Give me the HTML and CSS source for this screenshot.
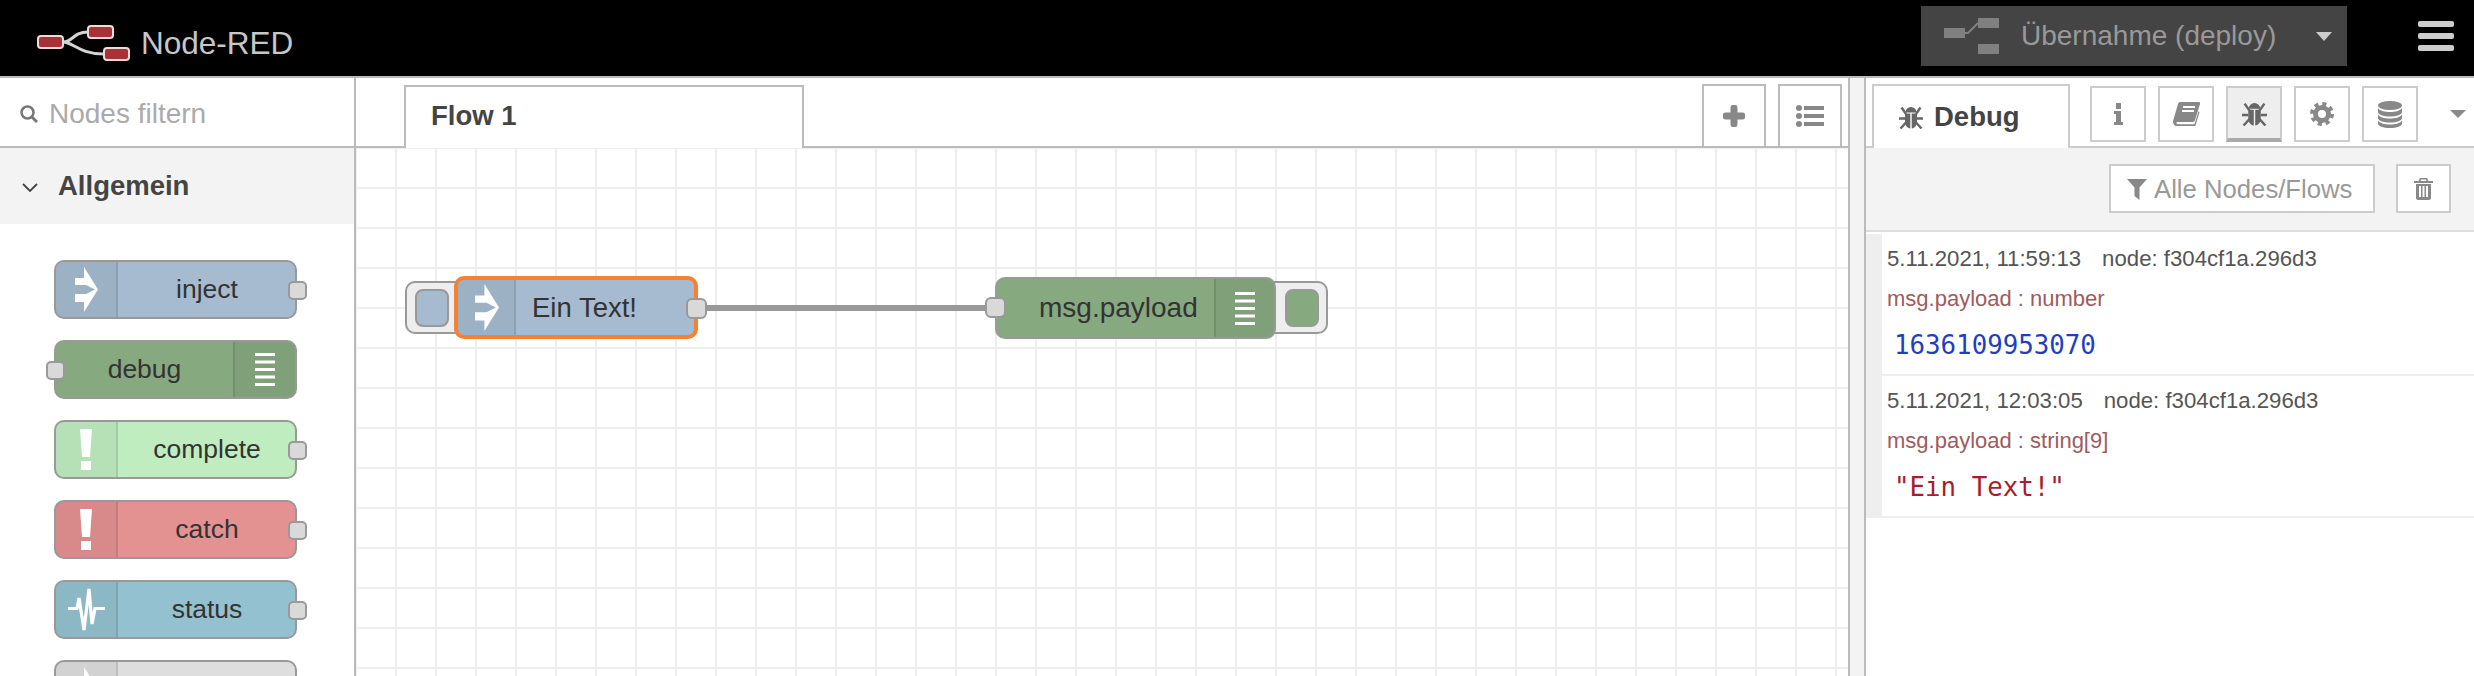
FILE: index.html
```html
<!DOCTYPE html>
<html lang="de">
<head>
<meta charset="utf-8">
<title>Node-RED</title>
<link rel="stylesheet" href="styles.css">
</head>
<body>
<svg class="defs" width="0" height="0">
  <defs>
    <symbol id="arrow" viewBox="0 0 24 45"><path d="M1 11H10V0L24 22.500L10 45V35H1V27H12L21 22.500L12 18H1Z"/></symbol>
    <symbol id="lines" viewBox="0 0 20 33"><path d="M0 0h20v3H0zM0 7.500h20v3H0zM0 15h20v3H0zM0 22.500h20v3H0zM0 30h20v3H0z"/></symbol>
    <symbol id="alert" viewBox="0 0 12 41"><path d="M0 0h12l-2 28H2zM1 32h10v9H1z"/></symbol>
    <symbol id="bug" viewBox="0 0 24 24"><path d="M6.500 7.500a5.500 5.500 0 0 1 11 0zM6 8.500h5.300V23.500C8 23 6 20 6 17zM12.700 8.500H18V17c0 3-2 6-5.300 6.500z"/><path d="M2.500 2.500l4.500 6.500M21.500 2.500L17 9M0 13.500h6M24 13.500h-6M1.500 23.500l5.500-6M22.500 23.500l-5.500-6" fill="none" stroke="currentColor" stroke-width="2.400"/></symbol>
  </defs>
</svg>

<header class="topbar">
  <div class="brand">
    <svg class="logo" width="96" height="40" viewBox="0 0 96 40">
      <path class="logo-wire" d="M27 18c10 0 10-10 25-10M27 18c10 0 16 12 41 12"/>
      <rect class="logo-node" x="2" y="12" width="25" height="12" rx="3"/>
      <rect class="logo-node" x="52" y="2" width="25" height="12" rx="3"/>
      <rect class="logo-node" x="68" y="24" width="25" height="12" rx="3"/>
    </svg>
    <span class="brand-name">Node-RED</span>
  </div>
  <button class="deploy">
    <svg class="deploy-icon" width="55" height="36" viewBox="0 0 55 36">
      <path d="M0 10h21v10H0zM34 0h21v10H34zM34 26h21v10H34z"/>
      <path d="M20 15h4L34 5" fill="none" stroke="currentColor" stroke-width="2"/>
    </svg>
    <span class="deploy-label">Übernahme (deploy)</span>
    <span class="caret caret-deploy"></span>
  </button>
  <div class="hamburger"><i></i><i></i><i></i></div>
</header>

<main class="main">
  <aside class="palette">
    <div class="filter">
      <svg class="search-icon" width="18" height="18" viewBox="0 0 18 18"><circle cx="7.500" cy="7.500" r="6" fill="none" stroke="currentColor" stroke-width="2.500"/><path d="M11.500 11.500L17 17" stroke="currentColor" stroke-width="3"/></svg>
      <span class="filter-text">Nodes filtern</span>
    </div>
    <div class="category">
      <svg class="chevron" width="16" height="9" viewBox="0 0 16 9"><path d="M1 1l7 7 7-7" fill="none" stroke="currentColor" stroke-width="1.800"/></svg>
      <span>Allgemein</span>
    </div>
    <div class="palette-list">
      <div class="pnode c-inject">
        <span class="picon"><svg class="i-arrow"><use href="#arrow"/></svg></span>
        <span class="plabel">inject</span>
        <span class="pport out"></span>
      </div>
      <div class="pnode c-debug">
        <span class="pport in"></span>
        <span class="plabel">debug</span>
        <span class="picon end"><svg class="i-lines"><use href="#lines"/></svg></span>
      </div>
      <div class="pnode c-complete">
        <span class="picon"><svg class="i-alert"><use href="#alert"/></svg></span>
        <span class="plabel">complete</span>
        <span class="pport out"></span>
      </div>
      <div class="pnode c-catch">
        <span class="picon"><svg class="i-alert"><use href="#alert"/></svg></span>
        <span class="plabel">catch</span>
        <span class="pport out"></span>
      </div>
      <div class="pnode c-status">
        <span class="picon"><svg class="i-pulse" viewBox="0 0 37 47"><path d="M0 22.500h9L11 12l5 32 5-41 3 35 3-15.500h10" fill="none" stroke="#fff" stroke-width="3.200"/></svg></span>
        <span class="plabel">status</span>
        <span class="pport out"></span>
      </div>
      <div class="pnode c-grey">
        <span class="picon"><svg class="i-arrow"><use href="#arrow"/></svg></span>
        <span class="plabel"></span>
      </div>
    </div>
  </aside>

  <section class="workspace">
    <div class="tabbar">
      <div class="flow-tab">Flow 1</div>
      <div class="tab-tools">
        <div class="tool">
          <svg class="tool-icon" width="22" height="22" viewBox="0 0 22 22"><path d="M11 3v16M3 11h16" stroke="currentColor" stroke-width="7" stroke-linecap="round"/></svg>
        </div>
        <div class="tool">
          <svg class="tool-icon" width="28" height="22" viewBox="0 0 28 22"><circle cx="3" cy="3" r="3"/><circle cx="3" cy="11" r="3"/><circle cx="3" cy="19" r="3"/><path d="M8 1h20v4H8zM8 9h20v4H8zM8 17h20v4H8z"/></svg>
        </div>
      </div>
    </div>
    <div class="canvas">
      <div class="wire"></div>

      <div class="inject-btn"><span class="btn-square sq-blue"></span></div>
      <div class="fnode fnode-inject">
        <span class="ficon"><svg class="i-arrow"><use href="#arrow"/></svg></span>
        <span class="flabel">Ein Text!</span>
      </div>
      <div class="fport fport-out"></div>

      <div class="debug-btn"><span class="btn-square sq-green"></span></div>
      <div class="fnode fnode-debug">
        <span class="flabel">msg.payload</span>
        <span class="ficon"><svg class="i-lines"><use href="#lines"/></svg></span>
      </div>
      <div class="fport fport-in"></div>
    </div>
  </section>

  <div class="separator"></div>

  <aside class="sidebar">
    <div class="side-tabs">
      <div class="debug-tab">
        <svg class="tab-bug" width="24" height="24"><use href="#bug"/></svg>
        <span>Debug</span>
      </div>
      <div class="side-tab">
        <svg class="side-icon" width="9" height="22" viewBox="0 0 9 22"><path d="M2 0h5v6H2zM0 8h7v11h2v3H0v-3h2v-8H0z"/></svg>
      </div>
      <div class="side-tab">
        <svg class="side-icon" width="27" height="24" viewBox="0 0 27 24"><path d="M7 0h19c1 0 1.500 1 1 2l-5 16c-.500 1-1 2-2 2H5c-1.500 0-2 1-1.500 1.500.300.500 1 .700 2 .700h16l4-13 1 1-4 13.300c-.300.800-1 1.500-2 1.500H4.500C2 24 0 22 0 20c0-1 .200-1.500.500-2.500L5 2C5.300 1 6 0 7 0z"/><path d="M10 5h12M9 9h12" stroke="#fff" stroke-width="2"/></svg>
      </div>
      <div class="side-tab active">
        <svg class="side-icon" width="25" height="25" viewBox="0 0 24 24"><use href="#bug"/></svg>
      </div>
      <div class="side-tab">
        <svg class="side-icon" width="24" height="24" viewBox="0 0 24 24"><circle cx="12" cy="12" r="6.500" fill="none" stroke="currentColor" stroke-width="5"/><circle cx="12" cy="12" r="10" fill="none" stroke="currentColor" stroke-width="4" stroke-dasharray="4 3.850"/></svg>
      </div>
      <div class="side-tab">
        <svg class="side-icon" width="24" height="27" viewBox="0 0 24 27"><ellipse cx="12" cy="4.500" rx="12" ry="4.500"/><path d="M0 7c2 3 7 4 12 4s10-1 12-4v4c0 2.500-5 4.500-12 4.500S0 13.500 0 11zM0 13.500c2 3 7 4 12 4s10-1 12-4v3.500c0 2.500-5 4.500-12 4.500S0 19.500 0 17zM0 19.500c2 3 7 4 12 4s10-1 12-4V22.500c0 2.500-5 4.500-12 4.500S0 25 0 22.500z"/></svg>
      </div>
      <span class="caret caret-side"></span>
    </div>
    <div class="side-toolbar">
      <div class="filter-btn">
        <svg class="tb-icon" width="20" height="21" viewBox="0 0 20 21"><path d="M0 0h20l-7.500 8.500V21L7.500 17V8.500z"/></svg>
        <span>Alle Nodes/Flows</span>
      </div>
      <div class="trash-btn">
        <svg class="tb-icon" width="19" height="22" viewBox="0 0 19 22"><path d="M6 0h7l1.500 3H19v2H0V3h4.500zM7 1.500L6.500 3h6L12 1.500zM2 6h15v14c0 1-1 2-2 2H4c-1 0-2-1-2-2zM5 8v11h2V8zM8.500 8v11h2V8zM12 8v11h2V8z" fill-rule="evenodd"/></svg>
      </div>
    </div>
    <div class="messages">
      <article class="msg">
        <div class="msg-row meta"><span class="date">5.11.2021, 11:59:13</span><span>node: f304cf1a.296d3</span></div>
        <div class="msg-row label">msg.payload : number</div>
        <div class="value num">1636109953070</div>
      </article>
      <article class="msg">
        <div class="msg-row meta"><span class="date">5.11.2021, 12:03:05</span><span>node: f304cf1a.296d3</span></div>
        <div class="msg-row label">msg.payload : string[9]</div>
        <div class="value str">"Ein Text!"</div>
      </article>
    </div>
  </aside>
</main>
</body>
</html>
```
FILE: styles.css
```css
* { box-sizing: border-box; }
html, body { margin: 0; height: 100%; overflow: hidden; }
body {
  display: flex;
  flex-direction: column;
  font-family: "Liberation Sans", Arial, sans-serif;
  font-size: 28px;
  color: #333;
  background: #fff;
}
.defs { display: block; height: 0; }

/* header */
.topbar {
  flex: none;
  height: 78px;
  display: flex;
  align-items: flex-start;
  background: #000;
  border-bottom: 2px solid #bbb;
}
.brand {
  display: flex;
  align-items: center;
  height: 76px;
  padding: 12px 0 0 36px;
  margin-right: auto;
  color: #c7c7c7;
}
.logo { margin-right: 9px; }
.logo-wire { fill: none; stroke: #d4d4d4; stroke-width: 3; }
.logo-node { fill: #a83238; stroke: #f0d9d6; stroke-width: 2; }
.brand-name { font-size: 31.500px; margin-top: -2px; }
.deploy {
  width: 426px;
  height: 60px;
  margin: 6px 71px 0 0;
  padding: 0 15px 0 23px;
  display: flex;
  align-items: center;
  border: 0;
  background: #444;
  color: #999;
  font: inherit;
}
.deploy-icon { fill: #808080; color: #808080; margin-right: 22px; }
.deploy-label { flex: 1; text-align: left; white-space: nowrap; }
.caret { display: block; width: 0; height: 0; border-style: solid; border-color: transparent; border-bottom-width: 0; }
.caret-deploy { border-width: 9px 8.500px 0; border-top-color: #ccc; }
.hamburger { width: 36px; margin: 21px 20px 0 0; display: flex; flex-direction: column; gap: 6px; }
.hamburger i { display: block; height: 6px; border-radius: 2px; background: #ccc; }

/* main */
.main { flex: 1; min-height: 0; display: flex; }

/* palette */
.palette {
  flex: none;
  width: 356px;
  border-right: 2px solid #bbb;
  display: flex;
  flex-direction: column;
  overflow: hidden;
}
.filter {
  flex: none;
  height: 70px;
  display: flex;
  align-items: center;
  padding: 4px 0 0 20px;
  gap: 11px;
  border-bottom: 2px solid #bbb;
  color: #aaa;
}
.search-icon { color: #777; }
.category {
  flex: none;
  height: 76px;
  display: flex;
  align-items: center;
  padding-left: 22px;
  gap: 20px;
  background: #f3f3f3;
  font-weight: 700;
  font-size: 27.500px;
  color: #444;
}
.chevron { color: #444; margin-top: 3px; }
.palette-list {
  padding: 36px 0 0 54px;
  display: flex;
  flex-direction: column;
  gap: 21px;
}
.pnode {
  position: relative;
  flex: none;
  width: 243px;
  height: 59px;
  display: flex;
  border: 2px solid #999;
  border-radius: 10px;
  font-size: 26.500px;
}
.c-inject { background: #a6bbcf; }
.c-debug { background: #87a980; }
.c-complete { background: #c0edc0; }
.c-catch { background: #e49191; }
.c-status { background: #94c1d0; }
.c-grey { background: #dedede; }
.picon {
  flex: none;
  width: 62px;
  display: flex;
  align-items: center;
  justify-content: center;
  background: rgba(0, 0, 0, .05);
  border-right: 2px solid rgba(0, 0, 0, .1);
  border-radius: 8px 0 0 8px;
  fill: #fff;
}
.picon.end {
  border-right: 0;
  border-left: 2px solid rgba(0, 0, 0, .1);
  border-radius: 0 8px 8px 0;
}
.plabel { flex: 1; text-align: center; line-height: 54px; }
.picon + .plabel { padding-left: 1px; }
.pport {
  position: absolute;
  top: 19px;
  width: 19px;
  height: 19px;
  background: #d9d9d9;
  border: 2px solid #999;
  border-radius: 5px;
}
.pport.out { right: -12px; }
.pport.in { left: -10px; }
.i-arrow { width: 24px; height: 45px; fill: #fff; }
.i-lines { width: 20px; height: 33px; fill: #fff; }
.i-alert { width: 12px; height: 41px; fill: #fff; }
.i-pulse { width: 37px; height: 47px; }

/* workspace */
.workspace { flex: none; width: 1492px; display: flex; flex-direction: column; }
.tabbar {
  flex: none;
  height: 70px;
  display: flex;
  align-items: flex-end;
  padding: 0 6px 0 48px;
  justify-content: space-between;
  border-bottom: 2px solid #bbb;
}
.flow-tab {
  width: 400px;
  height: 63px;
  margin-bottom: -2px;
  padding: 0 25px 3px;
  display: flex;
  align-items: center;
  background: #fff;
  border: 2px solid #bbb;
  border-bottom: 0;
  font-weight: 700;
  font-size: 27.500px;
  color: #444;
}
.tab-tools { display: flex; gap: 12px; }
.tool {
  width: 64px;
  height: 62px;
  display: flex;
  align-items: center;
  justify-content: center;
  border: 2px solid #bbb;
  border-bottom: 0;
}
.tool-icon { color: #888; fill: #888; }

.canvas {
  position: relative;
  flex: 1;
  overflow: hidden;
  background-color: #fff;
  background-image:
    linear-gradient(#eee 2px, transparent 2px),
    linear-gradient(90deg, #eee 2px, transparent 2px);
  background-size: 40px 40px;
  background-position: -1px -1px;
}
.wire { position: absolute; left: 350px; top: 157px; width: 280px; height: 6px; background: #999; }
.inject-btn, .debug-btn {
  position: absolute;
  top: 133px;
  height: 53px;
  background: #eee;
  border: 2px solid #999;
}
.inject-btn { left: 49px; width: 60px; border-radius: 10px 0 0 10px; padding: 6px 0 0 8px; }
.debug-btn { left: 910px; width: 62px; border-radius: 0 10px 10px 0; padding: 6px 0 0 17px; }
.btn-square { display: block; width: 34px; height: 38px; border-radius: 8px; border: 2px solid #999; }
.sq-blue { background: #a6bbcf; }
.sq-green { background: #87a980; }
.fnode { position: absolute; display: flex; align-items: stretch; border-radius: 10px; }
.fnode-inject { left: 98px; top: 128px; width: 244px; height: 63px; background: #a6bbcf; border: 4px solid #f78033; }
.fnode-debug { left: 639px; top: 129px; width: 281px; height: 62px; background: #87a980; border: 2px solid #999; }
.ficon {
  flex: none;
  display: flex;
  align-items: center;
  justify-content: center;
  fill: #fff;
  background: rgba(0, 0, 0, .05);
}
.ficon .i-arrow { width: 25px; height: 49px; }
.fnode-inject .ficon { width: 58px; border-right: 2px solid rgba(0, 0, 0, .1); border-radius: 6px 0 0 6px; }
.fnode-debug .ficon { width: 60px; border-left: 2px solid rgba(0, 0, 0, .1); border-radius: 0 8px 8px 0; }
.flabel { display: flex; align-items: center; flex: 1; white-space: nowrap; }
.fnode-inject .flabel { padding-left: 16px; font-size: 27.500px; }
.fnode-debug .flabel { padding-left: 42px; }
.fport {
  position: absolute;
  width: 21px;
  height: 21px;
  background: #d9d9d9;
  border: 2px solid #999;
  border-radius: 6px;
}
.fport-out { left: 330px; top: 150px; }
.fport-in { left: 629px; top: 149px; }

/* separator */
.separator {
  flex: none;
  width: 18px;
  background: #f3f3f3;
  border-left: 2px solid #bbb;
  border-right: 2px solid #bbb;
}

/* sidebar */
.sidebar { flex: 1; min-width: 0; display: flex; flex-direction: column; }
.side-tabs {
  position: relative;
  flex: none;
  height: 70px;
  display: flex;
  align-items: flex-start;
  gap: 12px;
  padding: 6px 0 0 6px;
  border-bottom: 2px solid #ccc;
}
.debug-tab {
  width: 198px;
  height: 64px;
  margin-right: 8px;
  padding-left: 25px;
  display: flex;
  align-items: center;
  gap: 11px;
  background: #fff;
  border: 2px solid #ccc;
  border-bottom: 0;
  font-weight: 700;
  font-size: 27.500px;
  color: #444;
}
.tab-bug { color: #666; fill: #666; }
.side-tab {
  width: 56px;
  height: 56px;
  margin-top: 2px;
  display: flex;
  align-items: center;
  justify-content: center;
  border: 2px solid #ccc;
}
.side-tab.active { background: #eee; border-bottom: 4px solid #aaa; }
.side-icon { color: #888; fill: #888; }
.side-tab.active .side-icon { color: #666; fill: #666; }
.caret-side {
  position: absolute;
  left: 584px;
  top: 32px;
  border-width: 8px 8px 0;
  border-top-color: #888;
}
.side-toolbar {
  flex: none;
  height: 84px;
  padding: 16px 23px 0 0;
  display: flex;
  justify-content: flex-end;
  gap: 21px;
  background: #f3f3f3;
  border-bottom: 2px solid #ddd;
  font-size: 25.700px;
  color: #999;
}
.filter-btn, .trash-btn {
  height: 49px;
  display: flex;
  align-items: center;
  background: #fff;
  border: 2px solid #ccc;
}
.filter-btn { width: 266px; padding: 1px 0 0 16px; gap: 7px; white-space: nowrap; }
.trash-btn { width: 55px; justify-content: center; }
.tb-icon { fill: #888; }
.messages { padding-top: 2px; }
.msg {
  height: 142px;
  padding: 5px 0 0 5px;
  border-left: 16px solid #eee;
  border-bottom: 2px solid #eee;
  font-size: 22px;
}
.msg-row { height: 40px; line-height: 40px; white-space: nowrap; }
.meta { color: #555; font-size: 22.200px; }
.date { margin-right: 21px; }
.label { color: #a05a5e; }
.value {
  padding-left: 7px;
  height: 53px;
  line-height: 53px;
  font-family: "DejaVu Sans Mono", monospace;
  font-size: 25.800px;
}
.num { color: #1f3fbf; }
.str { color: #a81c2c; }
```
